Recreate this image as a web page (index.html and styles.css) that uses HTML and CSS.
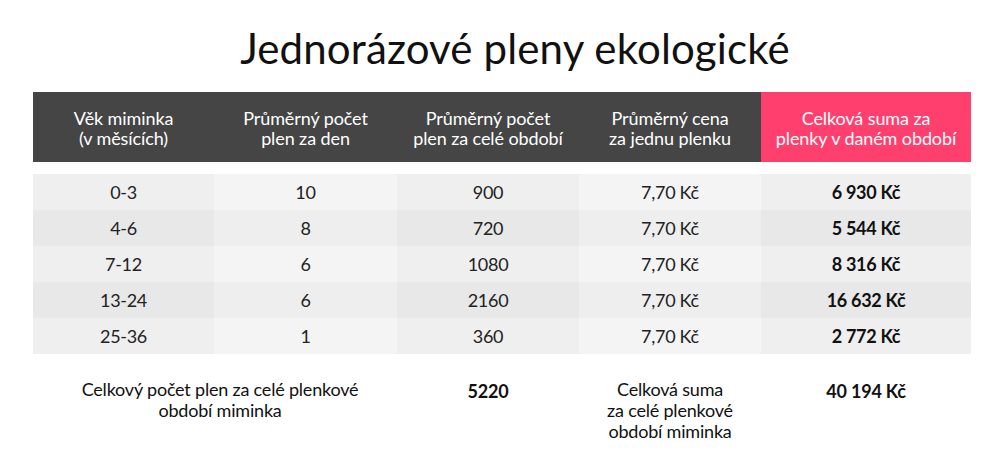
FILE: index.html
```html
<!DOCTYPE html>
<html lang="cs">
<head>
<meta charset="utf-8">
<title>Jednorázové pleny ekologické</title>
<link rel="stylesheet" href="styles.css">
</head>
<body>
<div class="page">
  <h1 class="title">Jednorázové pleny ekologické</h1>
  <div class="table">
    <div class="head">
      <div class="hcell">Věk miminka<br>(v měsících)</div>
      <div class="hcell">Průměrný počet<br>plen za den</div>
      <div class="hcell">Průměrný počet<br>plen za celé období</div>
      <div class="hcell">Průměrný cena<br>za jednu plenku</div>
      <div class="hcell hcell-accent">Celková suma za<br>plenky v daném období</div>
    </div>
    <div class="body">
      <div class="row">
        <div class="cell">0-3</div><div class="cell">10</div><div class="cell">900</div><div class="cell">7,70 Kč</div><div class="cell cell-strong">6 930 Kč</div>
      </div>
      <div class="row">
        <div class="cell">4-6</div><div class="cell">8</div><div class="cell">720</div><div class="cell">7,70 Kč</div><div class="cell cell-strong">5 544 Kč</div>
      </div>
      <div class="row">
        <div class="cell">7-12</div><div class="cell">6</div><div class="cell">1080</div><div class="cell">7,70 Kč</div><div class="cell cell-strong">8 316 Kč</div>
      </div>
      <div class="row">
        <div class="cell">13-24</div><div class="cell">6</div><div class="cell">2160</div><div class="cell">7,70 Kč</div><div class="cell cell-strong">16 632 Kč</div>
      </div>
      <div class="row">
        <div class="cell">25-36</div><div class="cell">1</div><div class="cell">360</div><div class="cell">7,70 Kč</div><div class="cell cell-strong">2 772 Kč</div>
      </div>
    </div>
    <div class="foot">
      <div class="fcell fcell-wide">Celkový počet plen za celé plenkové<br>období miminka</div>
      <div class="fcell fcell-strong">5220</div>
      <div class="fcell">Celková suma<br>za celé plenkové<br>období miminka</div>
      <div class="fcell fcell-strong">40 194 Kč</div>
    </div>
  </div>
</div>
</body>
</html>
```

FILE: styles.css
```css
html, body {
  margin: 0;
  padding: 0;
  background: #ffffff;
}

body {
  font-family: Lato, "Noto Sans", "DejaVu Sans", sans-serif;
  color: #1c1c1c;
  width: 1000px;
  height: 476px;
  overflow: hidden;
}

.page {
  display: flex;
  flex-direction: column;
}

.title {
  margin: 0;
  height: 92px;
  display: flex;
  align-items: center;
  justify-content: center;
  padding: 4px 0 0 30px;
  box-sizing: border-box;
  font-size: 42px;
  font-weight: 400;
  color: #111111;
  letter-spacing: 0.15px;
}

.table {
  margin: 0 29px 0 33px;
  display: flex;
  flex-direction: column;
}

.head,
.row,
.foot {
  display: grid;
  grid-template-columns: 181px 183px 182px 182px 210px;
}

.head {
  height: 70px;
  background: #454545;
}

.hcell {
  display: flex;
  align-items: center;
  justify-content: center;
  text-align: center;
  color: #ffffff;
  font-size: 18px;
  line-height: 20px;
  letter-spacing: -0.1px;
  padding-top: 1px;
}

.hcell-accent {
  background: #ff3f6e;
}

.body {
  margin-top: 12px;
  display: flex;
  flex-direction: column;
}

.row {
  height: 36px;
}

.cell {
  display: flex;
  align-items: center;
  justify-content: center;
  font-size: 18px;
  color: #222222;
  letter-spacing: -0.3px;
  background: #efefef;
}

.cell:nth-child(even) {
  background: #f4f4f4;
}

.row:nth-child(even) .cell {
  background: #e8e8e8;
}

.row:nth-child(even) .cell:nth-child(even) {
  background: #eeeeee;
}

.cell-strong {
  font-weight: 700;
  color: #111111;
}

.foot {
  padding-top: 25px;
}

.fcell {
  text-align: center;
  font-size: 18px;
  line-height: 21px;
  color: #111111;
  letter-spacing: -0.2px;
}

.fcell-wide {
  grid-column: span 2;
  padding-left: 10px;
}

.fcell-strong {
  font-weight: 700;
  font-size: 18px;
  padding-top: 2px;
}
```
